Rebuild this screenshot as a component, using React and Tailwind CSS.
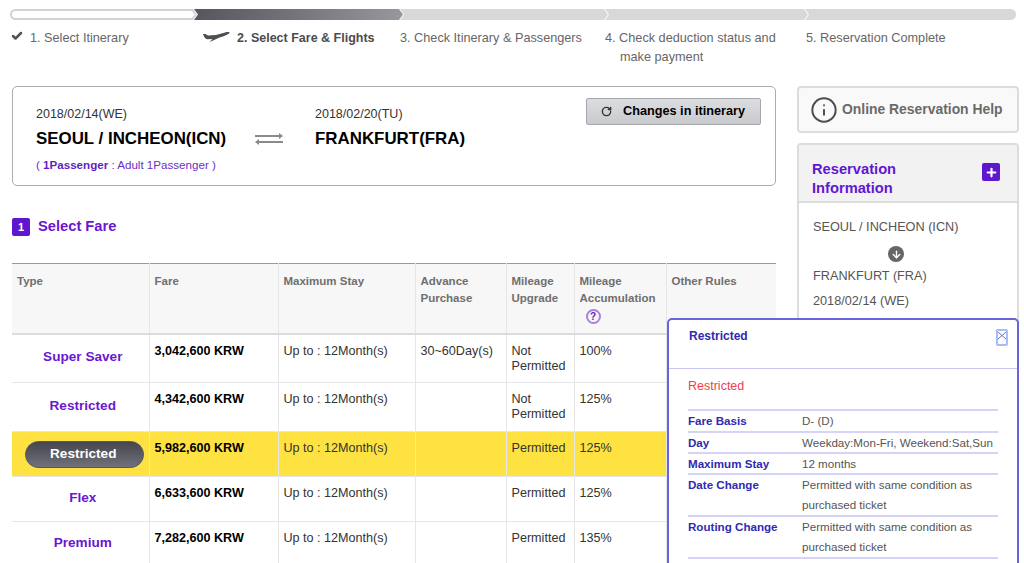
import { Check, RotateCw, Info, Plus, ArrowDown } from 'lucide-react';

const FARES = [
  { type: 'Super Saver', fare: '3,042,600 KRW', advance: '30~60Day(s)', upgrade: 'Not Permitted', acc: '100%', rowH: 'h-[49px]' },
  { type: 'Restricted', fare: '4,342,600 KRW', advance: '', upgrade: 'Not Permitted', acc: '125%', rowH: 'h-[49px]' },
  { type: 'Restricted', fare: '5,982,600 KRW', advance: '', upgrade: 'Permitted', acc: '125%', rowH: 'h-[45px]', selected: true },
  { type: 'Flex', fare: '6,633,600 KRW', advance: '', upgrade: 'Permitted', acc: '125%', rowH: 'h-[45px]' },
  { type: 'Premium', fare: '7,282,600 KRW', advance: '', upgrade: 'Permitted', acc: '135%', rowH: 'h-[45px]' },
];

const DETAILS = [
  { k: 'Fare Basis', v: 'D- (D)', lh: 'leading-[19.500px]' },
  { k: 'Day', v: 'Weekday:Mon-Fri, Weekend:Sat,Sun', lh: 'leading-[19px]' },
  { k: 'Maximum Stay', v: '12 months', lh: 'leading-[19.500px]' },
  { k: 'Date Change', v: 'Permitted with same condition as purchased ticket', lh: 'leading-[20px]' },
  { k: 'Routing Change', v: 'Permitted with same condition as purchased ticket', lh: 'leading-[20px]' },
];

function Plane() {
  return (
    <svg viewBox="0 0 27 10" className="w-[27px] h-[10px] fill-[#4f4f4f]">
      <path d="M0 2 L2.500 2 L5 3.500 L13 3 L22 .5 C24 0 27 -.2 26.500 1 C25 2.800 20 4.500 16 5.800 L10 8.500 L6.500 10 L9.500 7 L4 7.200 C2 6.800 .5 4 0 2 Z" />
    </svg>
  );
}

function Progress() {
  return (
    <div className="flex ml-[10px] w-[1006px] h-[11px] mt-[9px]">
      <div className="w-[187px] h-[11px] bg-[#d2d2d2] rounded-l-full -mr-[3px] z-30 p-[2px] [clip-path:polygon(0_0,calc(100%-4px)_0,100%_50%,calc(100%-4px)_100%,0_100%)]">
        <div className="h-full bg-white rounded-l-full [clip-path:polygon(0_0,calc(100%-3px)_0,100%_50%,calc(100%-3px)_100%,0_100%)]" />
      </div>
      <div className="w-[209px] h-[11px] bg-gradient-to-r from-[#55565e] to-[#97989c] -mr-[3px] z-20 [clip-path:polygon(0_0,calc(100%-4px)_0,100%_50%,calc(100%-4px)_100%,0_100%,4px_50%)]" />
      <div className="w-[208px] h-[11px] bg-[#d8d8d8] -mr-[3px] z-10 [clip-path:polygon(0_0,calc(100%-4px)_0,100%_50%,calc(100%-4px)_100%,0_100%,4px_50%)]" />
      <div className="w-[203px] h-[11px] bg-[#d8d8d8] -mr-[3px] [clip-path:polygon(0_0,calc(100%-4px)_0,100%_50%,calc(100%-4px)_100%,0_100%,4px_50%)]" />
      <div className="flex-1 h-[11px] bg-[#d8d8d8] rounded-r-full [clip-path:polygon(0_0,100%_0,100%_100%,0_100%,4px_50%)]" />
    </div>
  );
}

function StepLabels() {
  return (
    <div className="flex text-[12.700px] leading-[19px] text-[#666] mt-[9px] h-[57px]">
      <div className="w-[203px] pl-[11px] flex gap-[7px]">
        <Check className="w-[12px] h-[12px] mt-[1px] text-[#555]" strokeWidth={5} />
        <span>1. Select Itinerary</span>
      </div>
      <div className="w-[197px] flex items-start gap-[7px] text-[#4c4c4c] font-bold text-[12.500px]">
        <span className="mt-[3px]"><Plane /></span>
        <span className="whitespace-nowrap">2. Select Fare &amp; Flights</span>
      </div>
      <div className="w-[205px] whitespace-nowrap">3. Check Itinerary &amp; Passengers</div>
      <div className="w-[201px]">
        <div className="whitespace-nowrap">4. Check deduction status and</div>
        <div className="pl-[15px]">make payment</div>
      </div>
      <div className="whitespace-nowrap">5. Reservation Complete</div>
    </div>
  );
}

function ItineraryCard() {
  return (
    <div className="h-[100px] border border-[#a9abb0] rounded-[5px] flex justify-between pl-[23px] pr-[14px] pt-[11px]">
      <div className="pt-[8px]">
        <div className="flex items-start">
          <div className="w-[220px]">
            <div className="text-[12.500px] leading-[17px] text-[#333]">2018/02/14(WE)</div>
            <div className="text-[16.900px] leading-[20px] font-bold text-black mt-[6px] whitespace-nowrap">SEOUL / INCHEON(ICN)</div>
          </div>
          <svg viewBox="0 0 28 12" className="w-[28px] h-[12px] mt-[27px] ml-[-1px] mr-[32px] fill-[#8a8a8a]">
            <path d="M0 2h24V0l4 3-4 3V4H0zM28 8H4V6L0 9l4 3v-2h24z" />
          </svg>
          <div>
            <div className="text-[12.500px] leading-[17px] text-[#333]">2018/02/20(TU)</div>
            <div className="text-[16.900px] leading-[20px] font-bold text-black mt-[6px] whitespace-nowrap">FRANKFURT(FRA)</div>
          </div>
        </div>
        <div className="text-[11.600px] leading-[16px] text-[#6b2fc4] mt-[8px]">
          ( <b className="text-[#5f1fc0]">1Passenger</b> : Adult 1Passenger )
        </div>
      </div>
      <button className="w-[175px] h-[27px] border border-[#a5a7aa] rounded-[2px] bg-gradient-to-b from-[#dcdde0] to-[#c9cacd] flex items-center pl-[14px] gap-[11px] text-[12.700px] font-bold text-black whitespace-nowrap">
        <RotateCw className="w-[11px] h-[11px] text-[#333]" strokeWidth={3} />
        Changes in itinerary
      </button>
    </div>
  );
}

function FareTable() {
  return (
    <table className="w-[764px] table-fixed border-collapse mt-[27px] border-t border-t-[#999]">
      <colgroup>
        <col className="w-[137px]" />
        <col className="w-[129px]" />
        <col className="w-[137px]" />
        <col className="w-[91px]" />
        <col className="w-[68px]" />
        <col className="w-[92px]" />
        <col className="w-[110px]" />
      </colgroup>
      <thead>
        <tr className="h-[70px] bg-[#f7f7f7] text-[11.500px] leading-[17px] font-bold text-[#6f6f6f] border-b-2 border-b-[#dcdcdc] align-top">
          <th className="text-left font-bold px-[5px] pt-[9px]">Type</th>
          <th className="text-left font-bold px-[5px] pt-[9px] border-l border-[#e6e6e6]">Fare</th>
          <th className="text-left font-bold px-[5px] pt-[9px] border-l border-[#e6e6e6]">Maximum Stay</th>
          <th className="text-left font-bold px-[5px] pt-[9px] border-l border-[#e6e6e6]">Advance Purchase</th>
          <th className="text-left font-bold px-[5px] pt-[9px] border-l border-[#e6e6e6]">Mileage Upgrade</th>
          <th className="text-left font-bold px-[5px] pt-[9px] border-l border-[#e6e6e6] whitespace-nowrap">
            Mileage<br />Accumulation
            <div className="w-[15px] h-[15px] mt-[2px] ml-[6px] rounded-full border-2 border-[#a981e6] text-[#5f1fc0] text-[10px] leading-[11px] text-center">?</div>
          </th>
          <th className="text-left font-bold px-[5px] pt-[9px] border-l border-[#e6e6e6]">Other Rules</th>
        </tr>
      </thead>
      <tbody className="text-[12.600px] leading-[15px] text-[#333]">
        {FARES.map((f, i) => (
          <tr key={i} className={`${f.rowH} align-top border-b border-b-[#e6e6e6] ${f.selected ? 'bg-[#fee242]' : ''}`}>
            <td className={`text-center align-middle ${f.selected ? '' : 'pl-[5px] pb-[2px]'}`}>
              {f.selected ? (
                <div className="ml-[13px] mr-[5px] h-[27px] rounded-full bg-gradient-to-b from-[#45464e] to-[#70717a] border border-[#55565e] text-white font-bold text-[13.600px] leading-[24px] pr-[2px]">
                  {f.type}
                </div>
              ) : (
                <span className="text-[#6a17cf] font-bold text-[13.600px]">{f.type}</span>
              )}
            </td>
            <td className="px-[5px] pt-[9px] border-l border-[#e6e6e6] font-bold text-black whitespace-nowrap">{f.fare}</td>
            <td className="px-[5px] pt-[9px] border-l border-[#e6e6e6] whitespace-nowrap">Up to : 12Month(s)</td>
            <td className="px-[5px] pt-[9px] border-l border-[#e6e6e6] whitespace-nowrap">{f.advance}</td>
            <td className="px-[5px] pt-[9px] border-l border-[#e6e6e6]">{f.upgrade}</td>
            <td className="px-[5px] pt-[9px] border-l border-[#e6e6e6]">{f.acc}</td>
            <td className="border-l border-[#e6e6e6]" />
          </tr>
        ))}
      </tbody>
    </table>
  );
}

function Sidebar() {
  return (
    <div className="w-[222px] ml-[21px]">
      <div className="h-[47px] border-2 border-[#dcdcdc] rounded-[4px] bg-[#f9f9f9] flex items-center pl-[11px] gap-[4px]">
        <Info className="w-[28px] h-[28px] text-[#4d4d4d]" strokeWidth={1.700} />
        <span className="text-[13.900px] font-bold text-[#6a6a6a] whitespace-nowrap">Online Reservation Help</span>
      </div>
      <div className="mt-[10px] border-2 border-[#dcdcdc] rounded-t-[4px]">
        <div className="h-[58px] bg-[#f2f2f2] border-b-2 border-b-[#dcdcdc] flex justify-between pl-[13px] pr-[17px] pt-[15px]">
          <div className="text-[14.700px] leading-[19px] font-bold text-[#6016d3]">Reservation<br />Information</div>
          <div className="w-[18px] h-[18px] mt-[3px] rounded-[2px] bg-[#5f16cf] flex items-center justify-center">
            <Plus className="w-[13px] h-[13px] text-white" strokeWidth={4} />
          </div>
        </div>
        <div className="h-[200px] bg-white pl-[14px] pt-[16px] text-[12.700px] leading-[17px] text-[#555]">
          <div>SEOUL / INCHEON (ICN)</div>
          <div className="w-[16px] h-[16px] ml-[75px] mt-[10px] rounded-full bg-[#666] flex items-center justify-center">
            <ArrowDown className="w-[11px] h-[11px] text-white" strokeWidth={3} />
          </div>
          <div className="mt-[6px]">FRANKFURT (FRA)</div>
          <div className="mt-[8px]">2018/02/14 (WE)</div>
        </div>
      </div>
    </div>
  );
}

function RulesPopup() {
  return (
    <div className="absolute left-[667px] top-[318px] w-[352px] h-[300px] bg-white border-2 border-[#6a63e0] rounded-[5px]">
      <div className="h-[49px] border-b border-b-[#c9c6f5] pl-[20px] pr-[9px] pt-[8px] flex justify-between">
        <span className="text-[12px] leading-[17px] font-bold text-[#2f2ab0]">Restricted</span>
        <button className="relative w-[12px] h-[17px] mt-[1px] border-2 border-[#a3bff5] rounded-[2px] overflow-hidden">
          <svg viewBox="0 0 8 13" className="absolute inset-0 w-full h-full stroke-[#6d6fc0]" fill="none">
            <path d="M0 1l8 7M8 1L0 8" strokeWidth="1" />
          </svg>
        </button>
      </div>
      <div className="px-[19px]">
        <div className="text-[12.500px] leading-[17px] text-[#f0404a] mt-[9px] mb-[14px]">Restricted</div>
        {DETAILS.map((d) => (
          <div key={d.k} className={`flex border-t-2 border-t-[#d5d3f7] text-[11.600px] ${d.lh}`}>
            <div className="w-[114px] shrink-0 font-bold text-[#2f2ab0] whitespace-nowrap">{d.k}</div>
            <div className="flex-1 text-[#555]">{d.v}</div>
          </div>
        ))}
        <div className="border-t-2 border-t-[#d5d3f7]" />
      </div>
    </div>
  );
}

export default function App() {
  return (
    <div className="relative w-[1024px] h-[563px] overflow-hidden bg-white font-['Liberation_Sans',Arial,sans-serif]">
      <Progress />
      <StepLabels />
      <div className="flex pl-[12px]">
        <div className="w-[764px]">
          <ItineraryCard />
          <div className="flex items-center gap-[8px] mt-[32px]">
            <div className="w-[18px] h-[18px] rounded-[2px] bg-[#5f16cf] text-white text-[11px] font-bold text-center leading-[18px]">1</div>
            <span className="text-[14.700px] leading-[18px] font-bold text-[#6a17cf] -mt-[2px]">Select Fare</span>
          </div>
          <FareTable />
        </div>
        <Sidebar />
      </div>
      <RulesPopup />
    </div>
  );
}
